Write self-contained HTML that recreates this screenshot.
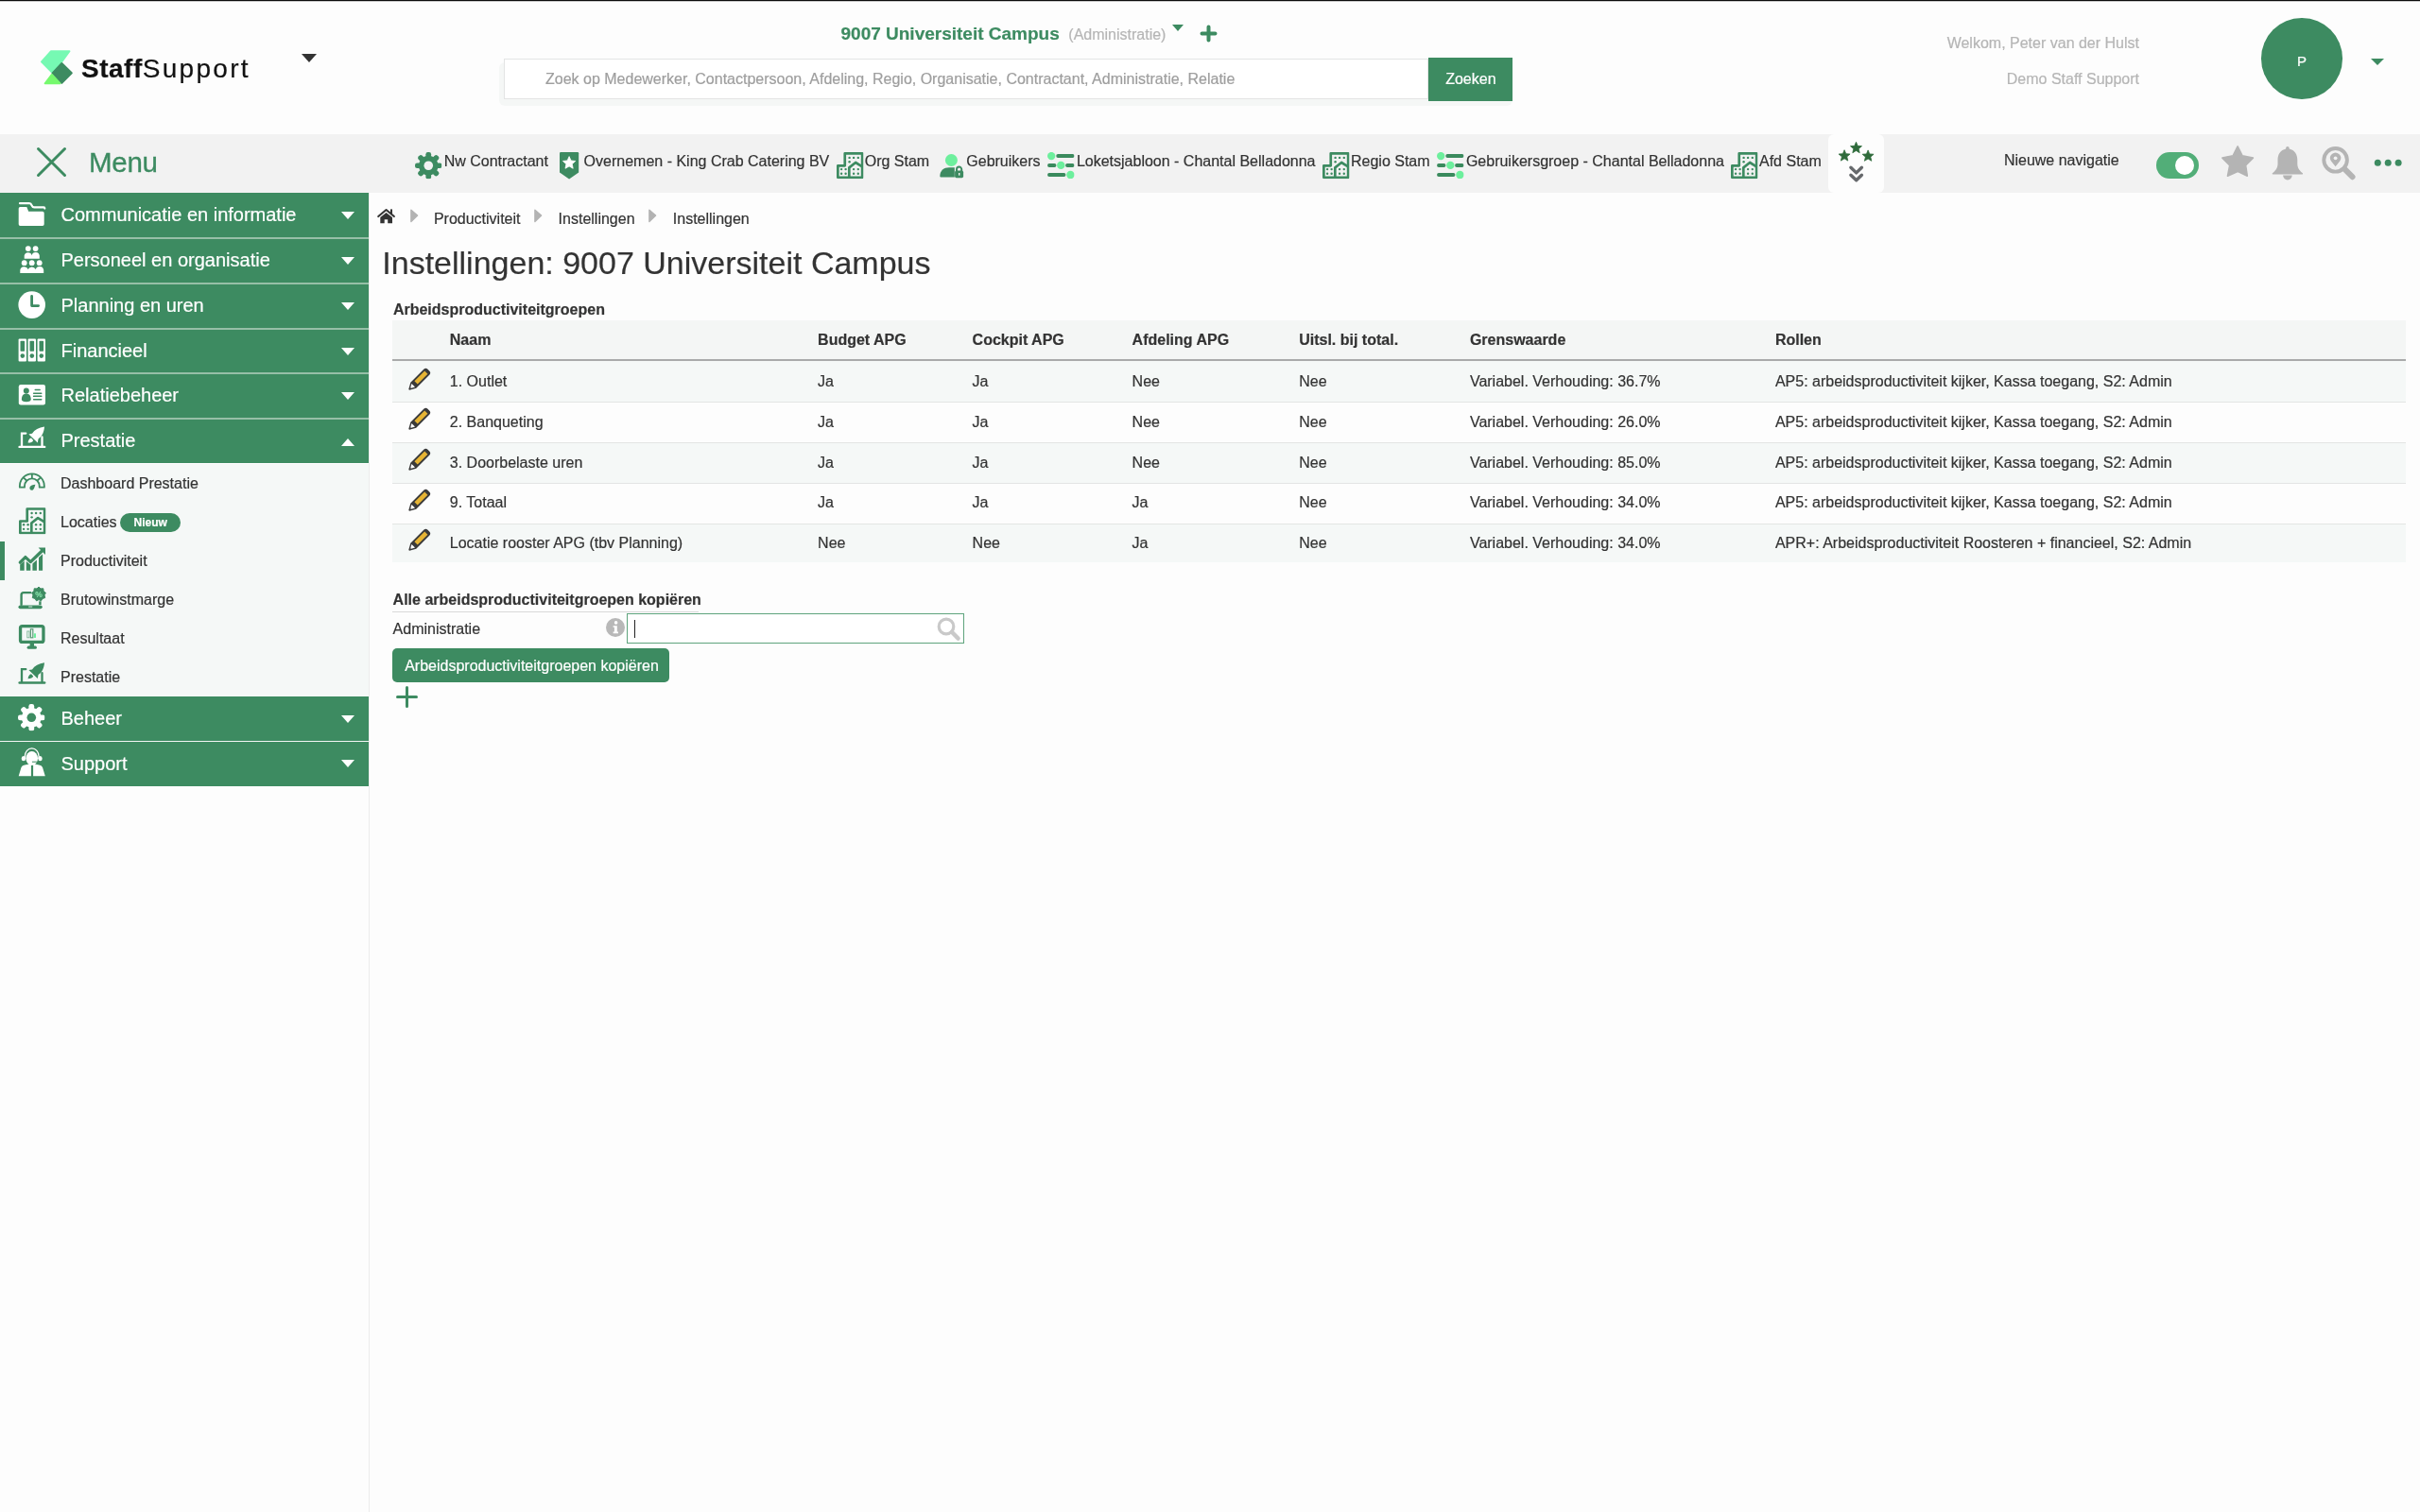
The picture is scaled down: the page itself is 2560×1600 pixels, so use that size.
<!DOCTYPE html>
<html><head><meta charset="utf-8">
<style>
*{margin:0;padding:0;box-sizing:border-box}
html,body{width:2560px;height:1600px;overflow:hidden;background:#fdfdfd}
body{-webkit-text-stroke:0.2px currentColor;position:relative;font-family:"Liberation Sans",sans-serif;color:#333;font-size:16px;line-height:16px}
.a{position:absolute;white-space:nowrap}
.g{color:#3d8b61}
svg{position:absolute;overflow:visible}
/* top */
#topline{left:0;top:0;width:2560px;height:2px;background:linear-gradient(#0d0d0d 0,#0d0d0d 1px,#c8c8c8 1px,#c8c8c8 2px)}
/* nav */
#nav{left:0;top:142px;width:2560px;height:62px;background:#f2f2f2}
/* sidebar */
#side{left:0;top:204px;width:390px;height:1396px;background:#fdfdfd;border-right:1px solid #ececec}
.sh{position:absolute;left:0;width:390px;height:47.75px;background:#3d8b61;color:#fff;font-size:20px;line-height:20px}

.sh .t{position:absolute;left:64.5px}
.sh .tri{position:absolute;left:361px;top:20px;width:0;height:0;border-left:7px solid transparent;border-right:7px solid transparent;border-top:8px solid #fff}
.sh .tri.up{border-top:0;border-bottom:8px solid #fff}
.sub{position:absolute;left:0;top:490.5px;width:390px;height:246.5px;background:#f5f8f7}
.si{position:absolute;left:64px;font-size:16px;color:#333}
/* content */
.th{font-weight:bold;color:#333}
.row{position:absolute;left:415px;width:2130px;height:42.65px}
.row.odd{background:#f5f8f7}
.row.bd{border-bottom:1px solid #e4e6e5}
.cell{position:absolute;top:13.3px;color:#333}
</style></head><body><div id="wrap" style="position:absolute;left:0;top:0;width:2560px;height:1600px;will-change:transform">
<div id="topline" class="a"></div>

<!-- logo -->
<svg style="left:0;top:0" width="100" height="100"><polygon points="54.04,54.20 73.44,54.20 65.43,65.25 54.79,76.18 43.98,65.36" fill="#76f9b3" stroke="#76f9b3" stroke-width="2" stroke-linejoin="round"/><polygon points="65.33,66.94 75.79,77.21 65.32,87.86 55.57,77.49" fill="#3d8b61" stroke="#3d8b61" stroke-width="2" stroke-linejoin="round"/><polygon points="54.86,78.95 63.43,88.30 47.64,88.30" fill="#76f96e" stroke="#76f96e" stroke-width="2" stroke-linejoin="round"/></svg>
<div class="a" style="left:86px;top:59px;font-size:28px;line-height:28px;color:#111"><span style="font-weight:bold;letter-spacing:0.5px">Staff</span><span style="letter-spacing:2.3px">Support</span></div>
<div class="a" style="left:318.7px;top:57px;width:0;height:0;border-left:8px solid transparent;border-right:8px solid transparent;border-top:9px solid #333"></div>

<!-- admin title -->
<div class="a g" style="left:889.5px;top:25.9px;font-size:19px;line-height:19px;font-weight:bold">9007 Universiteit Campus</div>
<div class="a" style="left:1130.3px;top:29px;color:#b5b5b5">(Administratie)</div>
<div class="a" style="left:1239.6px;top:26px;width:0;height:0;border-left:6.7px solid transparent;border-right:6.7px solid transparent;border-top:7px solid #3d8b61"></div>
<svg style="left:1270px;top:27px" width="18" height="18"><path d="M8.5 1.5V15.5M1.5 8.5H15.5" stroke="#3d8b61" stroke-width="4" stroke-linecap="round"/></svg>

<!-- search -->
<div class="a" style="left:528px;top:66px;width:1072px;height:46px;border-radius:6px;background:#f5f7f6"></div>
<div class="a" style="left:533px;top:62px;width:978px;height:43px;border:1px solid #e3e4e4;background:#fff"></div>
<div class="a" style="left:577px;top:76px;color:#9e9e9e">Zoek op Medewerker, Contactpersoon, Afdeling, Regio, Organisatie, Contractant, Administratie, Relatie</div>
<div class="a" style="left:1511px;top:61px;width:89px;height:46px;background:#3d8b61"></div>
<div class="a" style="left:1529.2px;top:76px;color:#fff">Zoeken</div>

<!-- user -->
<div class="a" style="right:297px;top:38px;color:#b5b5b5">Welkom, Peter van der Hulst</div>
<div class="a" style="right:297px;top:76px;color:#b5b5b5">Demo Staff Support</div>
<div class="a" style="left:2392px;top:19.3px;width:85.6px;height:85.6px;border-radius:50%;background:#3d8b61"></div>
<div class="a" style="left:2429.9px;top:57px;font-size:15px;line-height:15px;color:#fff">P</div>
<div class="a" style="left:2507.5px;top:62px;width:0;height:0;border-left:7px solid transparent;border-right:7px solid transparent;border-top:7.4px solid #3d8b61"></div>

<!-- nav -->
<div id="nav" class="a"></div>
<svg style="left:38.8px;top:156.3px" width="31" height="31"><path d="M1.5 1.5L29.5 29.5M29.5 1.5L1.5 29.5" stroke="#3d8b61" stroke-width="3" stroke-linecap="round"/></svg>
<div class="a g" style="left:94px;top:157.4px;font-size:29.5px;line-height:29.5px;letter-spacing:-0.3px;-webkit-text-stroke:0.3px #3d8b61">Menu</div>


<svg width="0" height="0" style="position:absolute">
<defs>
<symbol id="gear" viewBox="0 0 28 28"><mask id="gm"><rect width="28" height="28" fill="#fff"/><circle cx="14" cy="14" r="4.7" fill="#000"/></mask><g mask="url(#gm)"><circle cx="14" cy="14" r="10.2"/><rect x="11.2" y="0" width="5.6" height="8" rx="2.2" transform="rotate(0 14 14)"/><rect x="11.2" y="0" width="5.6" height="8" rx="2.2" transform="rotate(45 14 14)"/><rect x="11.2" y="0" width="5.6" height="8" rx="2.2" transform="rotate(90 14 14)"/><rect x="11.2" y="0" width="5.6" height="8" rx="2.2" transform="rotate(135 14 14)"/><rect x="11.2" y="0" width="5.6" height="8" rx="2.2" transform="rotate(180 14 14)"/><rect x="11.2" y="0" width="5.6" height="8" rx="2.2" transform="rotate(225 14 14)"/><rect x="11.2" y="0" width="5.6" height="8" rx="2.2" transform="rotate(270 14 14)"/><rect x="11.2" y="0" width="5.6" height="8" rx="2.2" transform="rotate(315 14 14)"/></g></symbol>
<symbol id="bld" viewBox="0 0 28.5 28.2"><g fill="none" stroke="#3d8b61" stroke-width="2.7" stroke-linejoin="round"><path d="M1.35,14.35H8.75V1.35H27.15V26.85H1.35Z"/><path d="M13.3,26.85V16.4L20.1,11L27.15,15.3"/></g><g fill="#3d8b61"><circle cx="13.6" cy="5.9" r="1.2"/><circle cx="18.1" cy="5.9" r="1.2"/><circle cx="22.8" cy="5.9" r="1.2"/><circle cx="13.6" cy="10.2" r="1.2"/><circle cx="5.1" cy="18.1" r="1.2"/><circle cx="9.6" cy="18.1" r="1.2"/><circle cx="5.1" cy="22.7" r="1.2"/><circle cx="9.6" cy="22.7" r="1.2"/><circle cx="18.1" cy="18.1" r="1.2"/><circle cx="22.8" cy="18.1" r="1.2"/><circle cx="18.1" cy="22.7" r="1.2"/><circle cx="22.8" cy="22.7" r="1.2"/></g></symbol>
<symbol id="sliders" viewBox="0 0 28.6 28"><g stroke="#3a8a5d" stroke-width="3.9" stroke-linecap="round"><path d="M11.2,4H26.6M2,14H7.5M21,14H26.6M2,24H17.5"/></g><g fill="#6def9d"><circle cx="4.2" cy="4.1" r="4.2"/><circle cx="14.3" cy="13.9" r="4.2"/><circle cx="24.4" cy="24" r="4.2"/></g></symbol>
</defs></svg>
<!-- nav items -->
<svg style="left:439.1px;top:160.7px" width="28.5" height="28.5" fill="#3d8b61"><use href="#gear"/></svg>
<div class="a" style="left:469.7px;top:162.5px">Nw Contractant</div>
<svg style="left:591.6px;top:160.7px" width="20.2" height="28.6" viewBox="0 0 20.2 28.6"><path d="M0,1.2Q0,0 1.2,0H19Q20.2,0 20.2,1.2V21.6L10.1,28.6L0,21.6Z" fill="#3d8b61"/><polygon transform="translate(10.1,11.6)" points="0.00,-7.00 1.94,-2.67 6.66,-2.16 3.14,1.02 4.11,5.66 0.00,3.30 -4.11,5.66 -3.14,1.02 -6.66,-2.16 -1.94,-2.67" fill="#fff" stroke="#fff" stroke-width="0.8" stroke-linejoin="round"/></svg>
<div class="a" style="left:617.6px;top:162.5px">Overnemen - King Crab Catering BV</div>
<svg style="left:885.3px;top:161px" width="28.5" height="28.2"><use href="#bld"/></svg>
<div class="a" style="left:914.7px;top:162.5px">Org Stam</div>
<svg style="left:993.8px;top:162.5px" width="26" height="26" viewBox="0 0 26 26"><circle cx="12.4" cy="6.5" r="6.5" fill="#6def9d"/><path d="M0.3,23.5C0.3,17.5 4.5,14.3 10,14.3H15.8V24.6H1.4Q0.3,24.6 0.3,23.5Z" fill="#3d8b61"/><path d="M18,18V16.2A2.6,2.6 0 0 1 23.2,16.2V18" fill="none" stroke="#3d8b61" stroke-width="2"/><rect x="16.1" y="17.6" width="9" height="7.6" rx="1.6" fill="#3d8b61"/><rect x="20" y="20" width="1.4" height="2.6" fill="#f2f2f2"/></svg>
<div class="a" style="left:1022.3px;top:162.5px">Gebruikers</div>
<svg style="left:1108.3px;top:161px" width="28.6" height="28"><use href="#sliders"/></svg>
<div class="a" style="left:1138.9px;top:162.5px">Loketsjabloon - Chantal Belladonna</div>
<svg style="left:1399.2px;top:161px" width="28.5" height="28.2"><use href="#bld"/></svg>
<div class="a" style="left:1429px;top:162.5px">Regio Stam</div>
<svg style="left:1520.4px;top:161px" width="28.6" height="28"><use href="#sliders"/></svg>
<div class="a" style="left:1550.9px;top:162.5px">Gebruikersgroep - Chantal Belladonna</div>
<svg style="left:1831px;top:161px" width="28.5" height="28.2"><use href="#bld"/></svg>
<div class="a" style="left:1861px;top:162.5px">Afd Stam</div>
<div class="a" style="left:1934px;top:142px;width:59px;height:62px;background:#fdfdfd;border-radius:6px"></div>
<svg style="left:1934px;top:142px" width="59" height="62" viewBox="0 0 59 62">
<g fill="#2f6b3b" stroke="#2f6b3b" stroke-width="0.8" stroke-linejoin="round">
<polygon transform="translate(29.5,14.6)" points="0.00,-6.30 1.65,-2.27 5.99,-1.95 2.66,0.87 3.70,5.10 0.00,2.80 -3.70,5.10 -2.66,0.87 -5.99,-1.95 -1.65,-2.27"/>
<polygon transform="translate(17.1,23)" points="0.00,-6.30 1.65,-2.27 5.99,-1.95 2.66,0.87 3.70,5.10 0.00,2.80 -3.70,5.10 -2.66,0.87 -5.99,-1.95 -1.65,-2.27"/>
<polygon transform="translate(42.1,23.2)" points="0.00,-6.30 1.65,-2.27 5.99,-1.95 2.66,0.87 3.70,5.10 0.00,2.80 -3.70,5.10 -2.66,0.87 -5.99,-1.95 -1.65,-2.27"/>
</g>
<path d="M23.9,35.3L29.7,40.9L35.4,35.3M23.9,43.2L29.7,48.8L35.4,43.2" fill="none" stroke="#66696c" stroke-width="3.4" stroke-linecap="round" stroke-linejoin="round"/>
</svg>
<div class="a" style="left:2119.9px;top:161.8px">Nieuwe navigatie</div>
<div class="a" style="left:2280.7px;top:160.8px;width:45.8px;height:28.3px;border-radius:14.2px;background:#52ae78"></div>
<div class="a" style="left:2300.7px;top:164.6px;width:20.8px;height:20.8px;border-radius:50%;background:#fff"></div>
<svg style="left:2340px;top:148px" width="210" height="50" viewBox="0 0 210 50">
<polygon points="27.1,6.9 32.1,16.9 43.4,19.1 35.6,26.9 37.3,38.2 27.1,33.4 16.5,38.2 18.7,26.9 10.9,19.1 22.1,16.9" fill="#b4b4b4" stroke="#b4b4b4" stroke-width="1.6" stroke-linejoin="round"/>
<path d="M79.9,6.9a1.8,1.8 0 0 1 1.8,1.8V9.6C87.5,11 90.3,15.5 90.3,21.5V25.5C90.3,30 93,33 96,35.3Q96.6,36.5 95.2,36.6H64.6Q63.2,36.5 63.8,35.3C66.8,33 69.5,30 69.5,25.5V21.5C69.5,15.5 72.3,11 78.1,9.6V8.7A1.8,1.8 0 0 1 79.9,6.9Z" fill="#b4b4b4"/>
<path d="M75.1,37.6a4.8,4.8 0 0 0 9.6,0Z" fill="#b4b4b4"/>
<circle cx="130.6" cy="21.3" r="12.3" fill="none" stroke="#b4b4b4" stroke-width="3.9"/>
<path d="M140.5,31.2L148.5,39.2" stroke="#b4b4b4" stroke-width="6" stroke-linecap="round"/>
<path d="M130.6,28.2L126,22.5A5.6,5.6 0 1 1 135.2,22.5Z" fill="#b4b4b4"/><circle cx="130.6" cy="19.3" r="1.9" fill="#f2f2f2"/>
<circle cx="175.3" cy="24.3" r="3.5" fill="#3d8b61"/><circle cx="186.2" cy="24.3" r="3.5" fill="#3d8b61"/><circle cx="197.1" cy="24.3" r="3.5" fill="#3d8b61"/>
</svg>

<!-- sidebar -->
<div class="a" style="left:390px;top:204px;width:1px;height:1396px;background:#ececec"></div>
<div class="a" style="left:0;top:204px;width:390px;height:286px;background:#96bfa7"></div>
<div class="sh" style="top:204px;height:47px"><span class="t" style="top:13px">Communicatie en informatie</span><i class="tri" style="top:19.5px"></i></div>
<div class="sh" style="top:253px;height:46px"><span class="t" style="top:12px">Personeel en organisatie</span><i class="tri" style="top:19.0px"></i></div>
<div class="sh" style="top:301px;height:46px"><span class="t" style="top:12px">Planning en uren</span><i class="tri" style="top:19.0px"></i></div>
<div class="sh" style="top:349px;height:45px"><span class="t" style="top:12px">Financieel</span><i class="tri" style="top:18.5px"></i></div>
<div class="sh" style="top:396px;height:46px"><span class="t" style="top:12px">Relatiebeheer</span><i class="tri" style="top:19.0px"></i></div>
<div class="sh" style="top:444px;height:46px"><span class="t" style="top:12px">Prestatie</span><i class="tri up" style="top:19.5px"></i></div>
<div class="sub"></div>
<div class="a" style="left:0;top:573.3px;width:5px;height:40.5px;background:#3d8b61"></div>
<div class="si a" style="top:504.1px">Dashboard Prestatie</div>
<div class="si a" style="top:545.1px">Locaties</div>
<div class="a" style="left:127.3px;top:542.8px;width:63.7px;height:20px;border-radius:10px;background:#3d8b61;color:#fff;font-weight:bold;font-size:12px;line-height:21.5px;text-align:center">Nieuw</div>
<div class="si a" style="top:586.1px">Productiviteit</div>
<div class="si a" style="top:627.1px">Brutowinstmarge</div>
<div class="si a" style="top:668.1px">Resultaat</div>
<div class="si a" style="top:709.1px">Prestatie</div>
<div class="a" style="left:0;top:737px;width:390px;height:95px;background:#f3f6f4"></div>
<div class="sh" style="top:737px;height:47px"><span class="t" style="top:13px">Beheer</span><i class="tri" style="top:19.5px"></i></div>
<div class="sh" style="top:785px;height:47px"><span class="t" style="top:13px">Support</span><i class="tri" style="top:19px"></i></div>
<!-- sidebar icons (white) -->
<svg style="left:0;top:0" width="60" height="840" viewBox="0 0 60 840">
<g fill="#fff">
 <!-- folder -->
 <path d="M21,215.2H31Q32.8,215.2 33.6,217.4Q34.3,219.4 36.2,219.4H46.2Q47.3,219.4 47.3,220.6" fill="none" stroke="#fff" stroke-width="2.2" stroke-linecap="round"/>
 <path d="M19.7,220.8Q19.7,219.1 21.4,219.1H28.3L30.2,223.8H45Q46.7,223.8 46.7,225.5V237.2Q46.7,238.9 45,238.9H21.4Q19.7,238.9 19.7,237.2Z"/>
 <!-- people -->
 <circle cx="29.8" cy="263.1" r="2.9"/><circle cx="37.6" cy="263.1" r="2.9"/>
 <path d="M25.7,273.8V270.6A4.1,4.1 0 0 1 33.7,270.2A4.1,4.1 0 0 1 41.8,270.6V273.8Z"/>
 <circle cx="25.7" cy="278.2" r="2.9"/><circle cx="33.7" cy="278.2" r="2.9"/><circle cx="41.7" cy="278.2" r="2.9"/>
 <path d="M21.3,288.9V285.7A4.4,4.4 0 0 1 29.7,285A4.4,4.4 0 0 1 37.7,285A4.4,4.4 0 0 1 46.2,285.7V288.9Z"/>
 <!-- clock -->
 <circle cx="33.7" cy="322.6" r="14.3"/>
 <path d="M33.6,313.4V323.6H40.6" fill="none" stroke="#3d8b61" stroke-width="2.8" stroke-linecap="round" stroke-linejoin="round"/>
 <!-- binders -->
 <rect x="19.6" y="358.4" width="8.4" height="24.2" rx="1"/><rect x="29.6" y="358.4" width="8.4" height="24.2" rx="1"/><rect x="39.6" y="358.4" width="8.4" height="24.2" rx="1"/>
 <g fill="#3d8b61"><rect x="21.5" y="360.7" width="4.6" height="11" rx="0.8"/><rect x="31.5" y="360.7" width="4.6" height="11" rx="0.8"/><rect x="41.5" y="360.7" width="4.6" height="11" rx="0.8"/>
 <circle cx="23.8" cy="376.6" r="2.3"/><circle cx="33.8" cy="376.6" r="2.3"/><circle cx="43.8" cy="376.6" r="2.3"/></g>
 <!-- card -->
 <rect x="19.8" y="407" width="28.2" height="21.4" rx="2.2"/>
 <g fill="#3d8b61"><circle cx="27.8" cy="413.4" r="3"/><path d="M22.9,422.5C22.9,418.5 25,416.5 27.8,416.5C30.6,416.5 32.7,418.5 32.7,422.5Q32.7,425.2 27.8,425.2Q22.9,425.2 22.9,422.5Z"/>
 <rect x="36.5" y="411.8" width="6.4" height="1.5" rx="0.7"/><rect x="34.9" y="415.4" width="9.6" height="1.5" rx="0.7"/><rect x="34.9" y="418.6" width="9.6" height="1.5" rx="0.7"/><rect x="34.9" y="422" width="9.6" height="1.5" rx="0.7"/></g>
 <!-- rocket chart -->
 <g id="rkt">
 <path d="M20.6,472.9H47.2" stroke="#fff" stroke-width="2.4" stroke-linecap="round"/>
 <path d="M23,472V458.6H27.3M44.5,472V462.5" fill="none" stroke="#fff" stroke-width="2.3" stroke-linecap="round"/>
 <path d="M47,451.6C41,452.5 36.5,455 34,458.8L30.4,459.4L34.6,463.5L39.8,468.5L40.5,464.5C44.4,462 46.5,457.5 47,451.6Z"/>
 <path d="M29.6,468.6C29.8,466 31,464 33,463.6L35.2,465.9C34.6,467.9 32.4,468.6 29.6,468.6Z"/>
 </g>
 <!-- beheer gear -->
 
 <!-- support -->
 <ellipse cx="33.7" cy="802.5" rx="6.3" ry="7.6"/>
 <path d="M26.3,803V800.5A7.4,8.6 0 0 1 41.1,800.5V803" fill="none" stroke="#fff" stroke-width="1.3"/>
 <ellipse cx="24.9" cy="802.7" rx="2.2" ry="2.6"/><ellipse cx="42.5" cy="802.7" rx="2.2" ry="2.6"/>
 <path d="M19.7,821.3L22.5,812Q23.5,810 26.2,809.6L32.9,808.3V821.3Z M35.1,808.3L41.3,809.6Q44,810 45,812L47.8,821.3H35.1Z"/>
 <path d="M34.3,806.2H38.5" stroke="#3d8b61" stroke-width="1" stroke-linecap="round"/>
</g>
<!-- green sub icons -->
<g fill="#3d8b61">
 <!-- gauge -->
 <path d="M20.85,515.7V514.3A13.0,13.0 0 0 1 46.85,514.3V515.7H41.70V514.3A7.85,7.85 0 0 0 26.00,514.3V515.7ZM39.40,508.75L43.04,505.11M33.85,506.45L33.85,501.30M28.30,508.75L24.66,505.11" fill="none" stroke="#3d8b61" stroke-width="1.8" stroke-linejoin="round"/>
 <path d="M31.6,515.2C32.5,513.7 34.5,513 37.4,512.7C36.6,515.3 35.9,518.8 33.6,518.8C32,518.8 30.9,517 31.6,515.2Z"/>
 <!-- chart up -->
 <path d="M21.2,597.5L25.7,593.6V603.7H21.2Z M27.8,594L32.3,597.8V603.7H27.8Z M34.4,596.6L38.9,592.4V603.7H34.4Z M41,590L45.1,586.2V603.7H41Z"/>
 <path d="M21.3,595.2L26.9,589.6L32.3,594.6L45.2,582.3" fill="none" stroke="#3d8b61" stroke-width="3.3" stroke-linecap="round" stroke-linejoin="round"/>
 <path d="M40.6,579.6H48V587Z"/>
 <!-- laptop percent -->
 <path d="M22.6,639.8V629.5Q22.6,627.1 25,627.1H32.2" fill="none" stroke="#3d8b61" stroke-width="2.4" stroke-linecap="round"/>
 <path d="M42.4,636.3V640" stroke="#3d8b61" stroke-width="2.4"/>
 <rect x="19.5" y="640.4" width="25.2" height="3.8" rx="1.9"/>
 <rect x="30.2" y="641.6" width="4" height="0.9" fill="#f5f8f7"/>
 <polygon transform="translate(41,628.6)" points="0,-7.5 2,-5.7 4.8,-5.8 5.1,-3 7.4,-1.2 6,1.2 6.7,4 4,4.8 2.5,7.2 0,6 -2.5,7.2 -4,4.8 -6.7,4 -6,1.2 -7.4,-1.2 -5.1,-3 -4.8,-5.8 -2,-5.7" stroke="#3d8b61" stroke-width="1" stroke-linejoin="round"/>
 <text x="41" y="631.6" font-size="8.5" font-weight="bold" text-anchor="middle" fill="#8ee8b0" font-family="Liberation Sans">%</text>
 <!-- monitor -->
 <rect x="21.55" y="662.55" width="24.4" height="16.9" rx="2" fill="none" stroke="#3d8b61" stroke-width="3.3"/>
 <rect x="31.6" y="680" width="4.4" height="5"/><rect x="28.6" y="683.6" width="10.3" height="3.2" rx="1.6"/>
 <rect x="28.8" y="668" width="2.2" height="6.8" fill="none" stroke="#7fb898" stroke-width="0.9"/>
 <rect x="32.4" y="665.8" width="2.4" height="9" fill="none" stroke="#5c9c78" stroke-width="1.2"/>
 <rect x="35.8" y="670.3" width="2.2" height="4.6" fill="#6def9d"/>
 <!-- rocket chart green -->
 <g transform="translate(0,249.6)">
 <path d="M20.6,472.9H47.2" stroke="#3d8b61" stroke-width="2.4" stroke-linecap="round"/>
 <path d="M23,472V458.6H27.3M44.5,472V462.5" fill="none" stroke="#3d8b61" stroke-width="2.3" stroke-linecap="round"/>
 <path d="M47,451.6C41,452.5 36.5,455 34,458.8L30.4,459.4L34.6,463.5L39.8,468.5L40.5,464.5C44.4,462 46.5,457.5 47,451.6Z"/>
 <path d="M29.6,468.6C29.8,466 31,464 33,463.6L35.2,465.9C34.6,467.9 32.4,468.6 29.6,468.6Z"/>
 </g>
</g>
</svg>
<svg style="left:19.4px;top:744.7px" width="28.6" height="28.6" fill="#fff"><use href="#gear"/></svg>
<svg style="left:19.5px;top:536.7px" width="28.5" height="28.5"><use href="#bld"/></svg>
<!-- content -->
<svg style="left:395px;top:215px" width="30" height="30" viewBox="0 0 30 30"><path d="M5.2,14.1L13.55,7.1L21.9,14.1" fill="none" stroke="#333" stroke-width="2" stroke-linecap="round" stroke-linejoin="round"/><rect x="18" y="6.4" width="2" height="5" fill="#333"/><path d="M7.3,21.2V15L13.55,10.1L20,15V21.2H15.2V17.2H11.7V21.2Z" fill="#333"/></svg>
<svg style="left:433.8px;top:221px" width="10" height="15" viewBox="0 0 10 15"><path d="M0.9,1.3L7.6,7.1L0.9,13.6Z" fill="#b3b3b3" stroke="#b3b3b3" stroke-width="1.4" stroke-linejoin="round"/></svg>
<svg style="left:565px;top:221px" width="10" height="15" viewBox="0 0 10 15"><path d="M0.9,1.3L7.6,7.1L0.9,13.6Z" fill="#b3b3b3" stroke="#b3b3b3" stroke-width="1.4" stroke-linejoin="round"/></svg>
<svg style="left:686.2px;top:221px" width="10" height="15" viewBox="0 0 10 15"><path d="M0.9,1.3L7.6,7.1L0.9,13.6Z" fill="#b3b3b3" stroke="#b3b3b3" stroke-width="1.4" stroke-linejoin="round"/></svg>
<div class="a" style="left:458.9px;top:224.1px">Productiviteit</div>
<div class="a" style="left:590.6px;top:224.1px">Instellingen</div>
<div class="a" style="left:711.8px;top:224.1px">Instellingen</div>
<div class="a" style="left:404.3px;top:261px;font-size:34px;line-height:34px">Instellingen: 9007 Universiteit Campus</div>
<div class="a th" style="left:415.9px;top:320px">Arbeidsproductiviteitgroepen</div>
<div class="a" style="left:415px;top:339px;width:2130px;height:41px;background:#f4f6f5"></div>
<div class="a" style="left:415px;top:380px;width:2130px;height:2px;background:#a9aaaa"></div>
<div class="a th" style="left:475.8px;top:352px">Naam</div>
<div class="a th" style="left:865.1px;top:352px">Budget APG</div>
<div class="a th" style="left:1028.6px;top:352px">Cockpit APG</div>
<div class="a th" style="left:1197.6px;top:352px">Afdeling APG</div>
<div class="a th" style="left:1374.2px;top:352px">Uitsl. bij total.</div>
<div class="a th" style="left:1554.9px;top:352px">Grenswaarde</div>
<div class="a th" style="left:1877.9px;top:352px">Rollen</div>
<div class="a" style="left:415px;top:382px;width:2130px;height:43px;background:#f5f8f7"></div>
<div class="a" style="left:415px;top:425px;width:2130px;height:43px;background:#fdfdfd"></div>
<div class="a" style="left:415px;top:468px;width:2130px;height:42.5px;background:#f5f8f7"></div>
<div class="a" style="left:415px;top:510.5px;width:2130px;height:43.0px;background:#fdfdfd"></div>
<div class="a" style="left:415px;top:553.5px;width:2130px;height:41.299999999999955px;background:#f5f8f7"></div>
<div class="a" style="left:415px;top:425px;width:2130px;height:1px;background:#e3e5e4"></div>
<div class="a" style="left:415px;top:468px;width:2130px;height:1px;background:#e3e5e4"></div>
<div class="a" style="left:415px;top:510.5px;width:2130px;height:1px;background:#e3e5e4"></div>
<div class="a" style="left:415px;top:553.5px;width:2130px;height:1px;background:#e3e5e4"></div>
<svg style="left:430.5px;top:389.70px" width="24" height="24" viewBox="0 0 24 24"><g transform="translate(12.3,11.7) rotate(-45)"><path d="M-8.5,-4.2H11.2A3,3 0 0 1 14.2,-1.2V1.2A3,3 0 0 1 11.2,4.2H-8.5L-15,0.6V-0.6Z" fill="#3a3a3a"/><rect x="-4.6" y="-2.3" width="15.2" height="4.6" fill="#e6b434"/><path d="M-8.6,-2.6L-12.4,-0.4V0.4L-8.6,2.6Z" fill="#fff"/></g></svg>
<div class="a" style="left:475.8px;top:396.26px">1. Outlet</div>
<div class="a" style="left:865.1px;top:396.26px">Ja</div>
<div class="a" style="left:1028.6px;top:396.26px">Ja</div>
<div class="a" style="left:1197.6px;top:396.26px">Nee</div>
<div class="a" style="left:1374.2px;top:396.26px">Nee</div>
<div class="a" style="left:1554.9px;top:396.26px">Variabel. Verhouding: 36.7%</div>
<div class="a" style="left:1877.9px;top:396.26px">AP5: arbeidsproductiviteit kijker, Kassa toegang, S2: Admin</div>
<svg style="left:430.5px;top:432.40px" width="24" height="24" viewBox="0 0 24 24"><g transform="translate(12.3,11.7) rotate(-45)"><path d="M-8.5,-4.2H11.2A3,3 0 0 1 14.2,-1.2V1.2A3,3 0 0 1 11.2,4.2H-8.5L-15,0.6V-0.6Z" fill="#3a3a3a"/><rect x="-4.6" y="-2.3" width="15.2" height="4.6" fill="#e6b434"/><path d="M-8.6,-2.6L-12.4,-0.4V0.4L-8.6,2.6Z" fill="#fff"/></g></svg>
<div class="a" style="left:475.8px;top:438.96px">2. Banqueting</div>
<div class="a" style="left:865.1px;top:438.96px">Ja</div>
<div class="a" style="left:1028.6px;top:438.96px">Ja</div>
<div class="a" style="left:1197.6px;top:438.96px">Nee</div>
<div class="a" style="left:1374.2px;top:438.96px">Nee</div>
<div class="a" style="left:1554.9px;top:438.96px">Variabel. Verhouding: 26.0%</div>
<div class="a" style="left:1877.9px;top:438.96px">AP5: arbeidsproductiviteit kijker, Kassa toegang, S2: Admin</div>
<svg style="left:430.5px;top:475.20px" width="24" height="24" viewBox="0 0 24 24"><g transform="translate(12.3,11.7) rotate(-45)"><path d="M-8.5,-4.2H11.2A3,3 0 0 1 14.2,-1.2V1.2A3,3 0 0 1 11.2,4.2H-8.5L-15,0.6V-0.6Z" fill="#3a3a3a"/><rect x="-4.6" y="-2.3" width="15.2" height="4.6" fill="#e6b434"/><path d="M-8.6,-2.6L-12.4,-0.4V0.4L-8.6,2.6Z" fill="#fff"/></g></svg>
<div class="a" style="left:475.8px;top:481.76px">3. Doorbelaste uren</div>
<div class="a" style="left:865.1px;top:481.76px">Ja</div>
<div class="a" style="left:1028.6px;top:481.76px">Ja</div>
<div class="a" style="left:1197.6px;top:481.76px">Nee</div>
<div class="a" style="left:1374.2px;top:481.76px">Nee</div>
<div class="a" style="left:1554.9px;top:481.76px">Variabel. Verhouding: 85.0%</div>
<div class="a" style="left:1877.9px;top:481.76px">AP5: arbeidsproductiviteit kijker, Kassa toegang, S2: Admin</div>
<svg style="left:430.5px;top:517.80px" width="24" height="24" viewBox="0 0 24 24"><g transform="translate(12.3,11.7) rotate(-45)"><path d="M-8.5,-4.2H11.2A3,3 0 0 1 14.2,-1.2V1.2A3,3 0 0 1 11.2,4.2H-8.5L-15,0.6V-0.6Z" fill="#3a3a3a"/><rect x="-4.6" y="-2.3" width="15.2" height="4.6" fill="#e6b434"/><path d="M-8.6,-2.6L-12.4,-0.4V0.4L-8.6,2.6Z" fill="#fff"/></g></svg>
<div class="a" style="left:475.8px;top:524.36px">9. Totaal</div>
<div class="a" style="left:865.1px;top:524.36px">Ja</div>
<div class="a" style="left:1028.6px;top:524.36px">Ja</div>
<div class="a" style="left:1197.6px;top:524.36px">Ja</div>
<div class="a" style="left:1374.2px;top:524.36px">Nee</div>
<div class="a" style="left:1554.9px;top:524.36px">Variabel. Verhouding: 34.0%</div>
<div class="a" style="left:1877.9px;top:524.36px">AP5: arbeidsproductiviteit kijker, Kassa toegang, S2: Admin</div>
<svg style="left:430.5px;top:560.30px" width="24" height="24" viewBox="0 0 24 24"><g transform="translate(12.3,11.7) rotate(-45)"><path d="M-8.5,-4.2H11.2A3,3 0 0 1 14.2,-1.2V1.2A3,3 0 0 1 11.2,4.2H-8.5L-15,0.6V-0.6Z" fill="#3a3a3a"/><rect x="-4.6" y="-2.3" width="15.2" height="4.6" fill="#e6b434"/><path d="M-8.6,-2.6L-12.4,-0.4V0.4L-8.6,2.6Z" fill="#fff"/></g></svg>
<div class="a" style="left:475.8px;top:566.86px">Locatie rooster APG (tbv Planning)</div>
<div class="a" style="left:865.1px;top:566.86px">Nee</div>
<div class="a" style="left:1028.6px;top:566.86px">Nee</div>
<div class="a" style="left:1197.6px;top:566.86px">Ja</div>
<div class="a" style="left:1374.2px;top:566.86px">Nee</div>
<div class="a" style="left:1554.9px;top:566.86px">Variabel. Verhouding: 34.0%</div>
<div class="a" style="left:1877.9px;top:566.86px">APR+: Arbeidsproductiviteit Roosteren + financieel, S2: Admin</div>
<div class="a th" style="left:415.6px;top:627px">Alle arbeidsproductiviteitgroepen kopiëren</div>
<div class="a" style="left:415px;top:646.5px;width:324px;height:1px;background:#d9d9d9"></div>
<div class="a" style="left:415.6px;top:658px">Administratie</div>
<svg style="left:641.2px;top:654.3px" width="20" height="20" viewBox="0 0 20 20"><circle cx="10" cy="10" r="10" fill="#b8b8b8"/><circle cx="10.6" cy="4.9" r="1.8" fill="#fff"/><path d="M7.6,8.2H11.8V14.6H13V16.2H7.6V14.6H8.9V9.8H7.6Z" fill="#fff"/></svg>
<div class="a" style="left:663.2px;top:649px;width:357px;height:32.2px;border:1.5px solid #5ea47d;background:#fff"></div>
<div class="a" style="left:670.6px;top:656px;width:1.5px;height:18.5px;background:#222"></div>
<svg style="left:990.9px;top:653px" width="26" height="25" viewBox="0 0 26 25"><circle cx="10" cy="10" r="7.8" fill="none" stroke="#c9c9c9" stroke-width="3.2"/><path d="M15.8,15.8L22.6,22.6" stroke="#c9c9c9" stroke-width="4.4" stroke-linecap="round"/></svg>
<div class="a" style="left:415.3px;top:685.7px;width:293px;height:36.6px;border-radius:5px;background:#3d8b61"></div>
<div class="a" style="left:428.2px;top:697px;color:#fff">Arbeidsproductiviteitgroepen kopiëren</div>
<svg style="left:418.8px;top:725.5px" width="23" height="23" viewBox="0 0 23 23"><path d="M11.5,1.5V21.5M1.5,11.5H21.5" stroke="#3d8b61" stroke-width="3" stroke-linecap="round"/></svg>
</div></body></html>
